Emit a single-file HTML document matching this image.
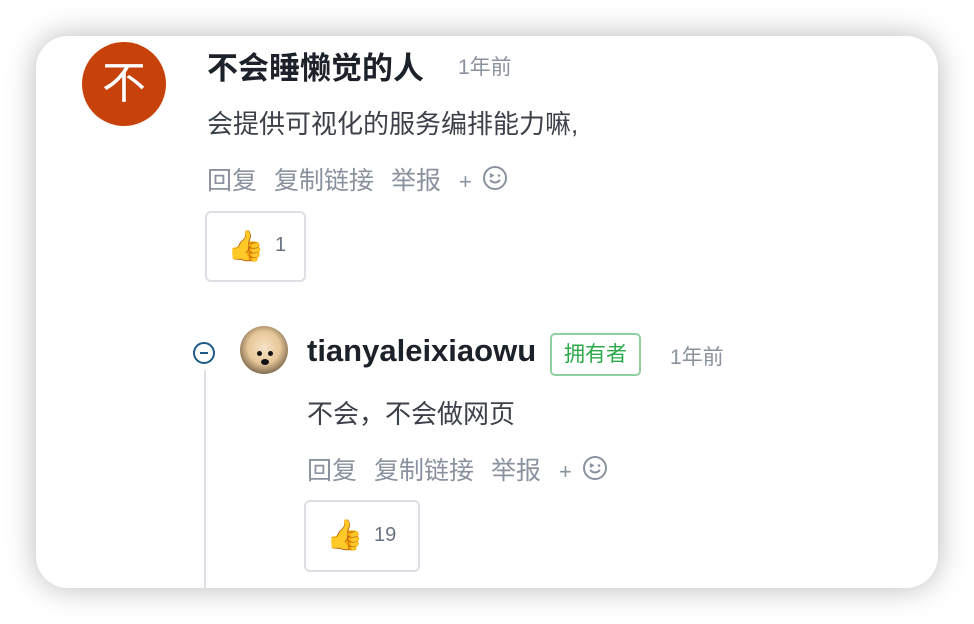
<!DOCTYPE html>
<html><head><meta charset="utf-8"><style>
html,body{margin:0;padding:0;background:#fff;width:974px;height:624px;overflow:hidden;font-family:"Liberation Sans","Noto Sans CJK SC",sans-serif;}
.card{position:absolute;left:36px;top:36px;width:902px;height:552px;background:#fff;border-radius:32px;box-shadow:0 0 30px rgba(0,0,0,.28);overflow:hidden}
.a{position:absolute;white-space:nowrap}
.gray{color:#8a919f}
.act{position:absolute;white-space:nowrap;color:#8a919f;font-size:25px}
.like{position:absolute;border:2px solid #dcdfe4;border-radius:6px;box-sizing:border-box}
</style></head><body>
<div class="card">
<div class="a" style="left:46px;top:6px;width:84px;height:84px;border-radius:50%;background:#c7410a;color:#fff;font-size:44px;line-height:84px;text-align:center">不</div>
<div class="a" style="left:171px;top:7px;font-size:31px;font-weight:bold;color:#1d2129">不会睡懒觉的人</div>
<div class="a gray" style="left:422px;top:15px;font-size:21px">1年前</div>
<div class="a" style="left:171px;top:68px;font-size:26px;color:#3c4049">会提供可视化的服务编排能力嘛,</div>
<div class="act" style="left:171px;top:125px">回复</div>
<div class="act" style="left:238px;top:125px">复制链接</div>
<div class="act" style="left:355px;top:125px">举报</div>
<div class="act" style="left:423px;top:133px;font-size:22px">+</div>
<svg class="a" style="left:446px;top:129px" width="26" height="26" viewBox="0 0 26 26" fill="none" stroke="#8a919f" stroke-width="2"><circle cx="13" cy="13" r="11"/><path d="M8 15q5 5 10 0" /><path d="M8 9l2.5 1.5L8 12"/><circle cx="17" cy="10.5" r="1.3" fill="#8a919f" stroke="none"/></svg>
<div class="like" style="left:169px;top:175px;width:101px;height:71px"><span class="a" style="left:20px;top:16px;font-size:30px">👍</span><span class="a" style="left:68px;top:21px;font-size:20px;color:#6b7280">1</span></div>

<div class="a" style="left:168px;top:334px;width:2px;height:230px;background:#dcdfe4"></div>
<div class="a" style="left:157px;top:306px;width:22px;height:22px;border:2px solid #1e5a86;border-radius:50%;box-sizing:border-box"><div style="position:absolute;left:5px;top:8px;width:8px;height:2px;background:#1e5a86"></div></div>
<div class="a" style="left:204px;top:290px;width:48px;height:48px;border-radius:50%;background:radial-gradient(circle at 50% 45%,#f4e3c4 0,#e7c79a 45%,#6b5a40 80%,#2b2b2b 100%)"><div style="position:absolute;left:17px;top:25px;width:5px;height:5px;background:#111;border-radius:50%"></div><div style="position:absolute;left:28px;top:25px;width:5px;height:5px;background:#111;border-radius:50%"></div><div style="position:absolute;left:21px;top:33px;width:8px;height:6px;background:#111;border-radius:50%"></div></div>
<div class="a" style="left:271px;top:297px;font-size:31px;font-weight:bold;color:#1d2129">tianyaleixiaowu</div>
<div class="a" style="left:514px;top:297px;width:91px;height:43px;border:2px solid #8fd19e;border-radius:5px;box-sizing:border-box;color:#2ca94a;font-size:21px;line-height:39px;text-align:center">拥有者</div>
<div class="a gray" style="left:634px;top:305px;font-size:21px">1年前</div>
<div class="a" style="left:271px;top:358px;font-size:26px;color:#3c4049">不会，不会做网页</div>
<div class="act" style="left:271px;top:415px">回复</div>
<div class="act" style="left:338px;top:415px">复制链接</div>
<div class="act" style="left:455px;top:415px">举报</div>
<div class="act" style="left:523px;top:423px;font-size:22px">+</div>
<svg class="a" style="left:546px;top:419px" width="26" height="26" viewBox="0 0 26 26" fill="none" stroke="#8a919f" stroke-width="2"><circle cx="13" cy="13" r="11"/><path d="M8 15q5 5 10 0" /><path d="M8 9l2.5 1.5L8 12"/><circle cx="17" cy="10.5" r="1.3" fill="#8a919f" stroke="none"/></svg>
<div class="like" style="left:268px;top:464px;width:116px;height:72px"><span class="a" style="left:20px;top:16px;font-size:30px">👍</span><span class="a" style="left:68px;top:22px;font-size:20px;color:#6b7280">19</span></div>
</div>
</body></html>
